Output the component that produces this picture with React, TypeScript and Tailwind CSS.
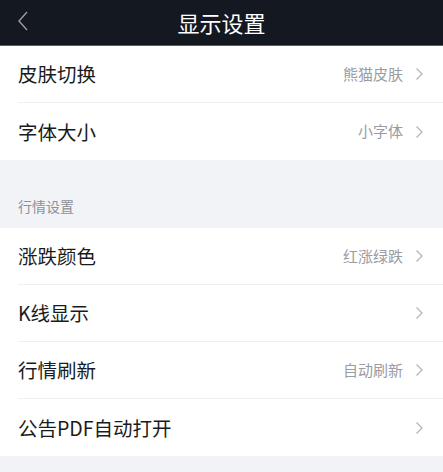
import React from "react";

const Chevron = () => (
  <svg width="9" height="14" viewBox="0 0 9 14" fill="none" className="ml-[12px]">
    <path d="M1.5 1.5 L7 7 L1.5 12.5" stroke="#b4b6bd" strokeWidth="1.3" />
  </svg>
);

const Row = ({ title, value, last }: { title: string; value?: string; last?: boolean }) => (
  <div className="flex h-[57px] items-center bg-white pl-[18px]">
    <div className={`flex h-full flex-1 items-center pr-[19px] ${last ? "" : "border-b border-[#eeeff2]"}`}>
      <span className="flex-1 text-[19.5px] text-[#1a1b20]">{title}</span>
      {value && <span className="text-[15px] text-[#9a9ca4]">{value}</span>}
      <Chevron />
    </div>
  </div>
);

export default function App() {
  return (
    <div
      className="flex h-[472px] w-[443px] flex-col bg-[#f2f3f7]"
      style={{ fontFamily: '"Noto Sans CJK SC", "Noto Sans", sans-serif' }}
    >
      <div className="relative flex h-[46px] items-center justify-center border-b border-[#5a5d64] bg-[#141821]">
        <svg width="12" height="20" viewBox="0 0 12 20" fill="none" className="absolute left-[17px] top-[11px]">
          <path d="M10 1 L2 10 L10 19" stroke="#9a9ca3" strokeWidth="1.4" />
        </svg>
        <span className="text-[22px] text-white">显示设置</span>
      </div>
      <Row title="皮肤切换" value="熊猫皮肤" />
      <Row title="字体大小" value="小字体" last />
      <div className="flex h-[68px] items-end pb-[11px] pl-[18px]">
        <span className="text-[14px] text-[#8e9098]">行情设置</span>
      </div>
      <Row title="涨跌颜色" value="红涨绿跌" />
      <Row title="K线显示" />
      <Row title="行情刷新" value="自动刷新" />
      <Row title="公告PDF自动打开" last />
    </div>
  );
}
